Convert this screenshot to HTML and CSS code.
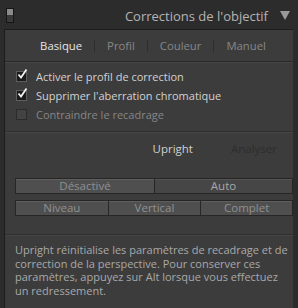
FILE: index.html
```html
<!DOCTYPE html>
<html lang="fr">
<head>
<meta charset="utf-8">
<link rel="stylesheet" href="styles.css">
</head>
<body>
<div class="app">
  <div class="header">
    <span class="toggle"></span>
    <span class="title">Corrections de l'objectif</span>
    <svg class="tri" width="10" height="9" viewBox="0 0 10 9"><path d="M0 0H10L5 9Z" fill="#9a9a9a"/></svg>
  </div>
  <div class="panel">
    <div class="tabs">
      <span class="tab active">Basique</span>
      <span class="sep"></span>
      <span class="tab">Profil</span>
      <span class="sep"></span>
      <span class="tab">Couleur</span>
      <span class="sep"></span>
      <span class="tab">Manuel</span>
    </div>
    <div class="checks">
      <label class="check"><span class="box on"><svg width="11" height="11" viewBox="0 0 11 11"><path d="M1.5 5.5L4 8.5L9.5 0.5" fill="none" stroke="#f2f2f2" stroke-width="1.8"/></svg></span>Activer le profil de correction</label>
      <label class="check"><span class="box on"><svg width="11" height="11" viewBox="0 0 11 11"><path d="M1.5 5.5L4 8.5L9.5 0.5" fill="none" stroke="#f2f2f2" stroke-width="1.8"/></svg></span>Supprimer l'aberration chromatique</label>
      <label class="check disabled"><span class="box"></span>Contraindre le recadrage</label>
    </div>
    <div class="upright">
      <div class="urow">
        <span class="ulabel">Upright</span>
        <span class="analyse">Analyser</span>
      </div>
      <div class="btns two">
        <span class="btn">Désactivé</span>
        <span class="btn sel">Auto</span>
      </div>
      <div class="btns three">
        <span class="btn">Niveau</span>
        <span class="btn">Vertical</span>
        <span class="btn">Complet</span>
      </div>
    </div>
    <p class="desc">Upright réinitialise les paramètres de recadrage et de correction de la perspective. Pour conserver ces paramètres, appuyez sur Alt lorsque vous effectuez un redressement.</p>
  </div>
</div>
</body>
</html>
```
FILE: styles.css
```css
html, body {
  margin: 0;
  padding: 0;
  background: #2c2c2c;
}
.app {
  width: 298px;
  height: 308px;
  overflow: hidden;
  font-family: "Open Sans", "DejaVu Sans", sans-serif;
  background: #2c2c2c;
}
.header {
  height: 29px;
  display: flex;
  align-items: center;
  padding: 0 8px 0 6px;
  box-sizing: border-box;
}
.toggle {
  width: 6px;
  height: 13px;
  border: 1px solid #151515;
  background: linear-gradient(#8a8a8a 0 45%, #3a3a3a 45% 100%);
  margin-top: 1px;
}
.title {
  flex: 1;
  text-align: right;
  color: #b4b4b4;
  font-size: 13px;
  padding-right: 12px;
  margin-top: 2px;
}
.tri {
  margin-top: 2px;
}
.panel {
  margin: 0 5px 0 4px;
  border-top: 1px solid #1d1d1d;
  border-left: 1px solid #1d1d1d;
  background: #3c3c3c;
  height: 279px;
}
.tabs {
  height: 31px;
  display: flex;
  align-items: center;
  justify-content: center;
  gap: 12px;
  border-bottom: 1px solid #2a2a2a;
  box-shadow: 0 1px 0 #454545;
  padding-left: 8px;
  font-size: 11.3px;
}
.tab {
  color: #878787;
}
.tab.active {
  color: #e6e6e6;
}
.sep {
  width: 1px;
  height: 12px;
  background: #2e2e2e;
}
.checks {
  padding: 5px 0 7px 11px;
  display: flex;
  flex-direction: column;
  border-bottom: 1px solid #2e2e2e;
  box-shadow: 0 1px 0 #464646;
}
.check {
  display: flex;
  align-items: center;
  height: 19px;
  font-size: 11px;
  color: #d2d2d2;
}
.check.disabled {
  color: #868686;
}
.box {
  width: 9px;
  height: 9px;
  border: 1px solid #5e5e5e;
  background: #1b1b1b;
  margin-right: 9px;
  position: relative;
}
.box svg {
  position: absolute;
  left: 0;
  top: -3px;
}
.check.disabled .box {
  background: #434343;
  border-color: #2b2b2b;
}
.upright {
  padding: 0 0 18px 10px;
  border-bottom: 1px solid #2e2e2e;
  box-shadow: 0 1px 0 #464646;
}
.urow {
  height: 33px;
  display: flex;
  align-items: center;
  justify-content: flex-end;
  padding-right: 16px;
  gap: 38px;
  font-size: 11.5px;
  margin-bottom: 13px;
}
.ulabel {
  color: #d0d0d0;
}
.analyse {
  color: #2d2d2d;
}
.btns {
  display: grid;
  margin-bottom: 6px;
}
.btns.two {
  grid-template-columns: 1fr 1fr;
}
.btns.three {
  grid-template-columns: 1fr 1fr 1fr;
  margin-bottom: 0;
}
.btn {
  height: 14px;
  border: 1px solid #262626;
  border-right-width: 0;
  background: #4f4f4f;
  box-shadow: inset 0 1px 0 #5f5f5f;
  color: #8f8f8f;
  font-size: 11.5px;
  line-height: 14px;
  text-align: center;
}
.btn:last-child {
  border-right-width: 1px;
}
.btn.sel {
  background: #464646;
  box-shadow: inset 0 1px 0 #545454;
  color: #a6a6a6;
}
.desc {
  margin: 0;
  padding: 8px 4px 0 10px;
  font-size: 11px;
  line-height: 13.7px;
  color: #a9a9a9;
}
```
